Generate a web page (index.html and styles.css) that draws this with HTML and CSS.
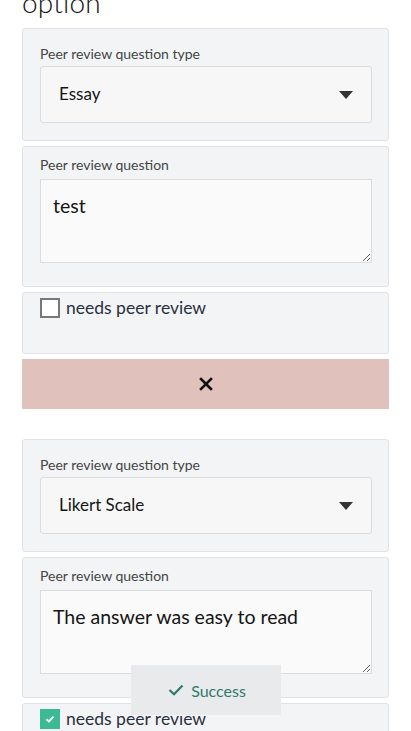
FILE: index.html
```html
<!DOCTYPE html>
<html lang="en">
<head>
<meta charset="utf-8">
<title>Peer review option</title>
<link rel="stylesheet" href="styles.css">
</head>
<body>
<main class="page">
  <h1 class="title">option</h1>

  <section class="card card-select">
    <label class="field-label">Peer review question type</label>
    <div class="select">
      <span class="select-value">Essay</span>
      <svg class="caret" width="14" height="8" viewBox="0 0 14 8"><path d="M0 0 H14 L7 8 Z" fill="#333"/></svg>
    </div>
  </section>

  <section class="card card-text">
    <label class="field-label">Peer review question</label>
    <textarea class="textarea" readonly>test</textarea>
  </section>

  <section class="card card-check">
    <div class="check-row">
      <span class="checkbox"></span>
      <span class="check-label">needs peer review</span>
    </div>
  </section>

  <button class="delete-bar" type="button" aria-label="Remove">
    <svg width="14" height="14" viewBox="0 0 14 14"><path d="M2 2 L12 12 M12 2 L2 12" stroke="#111" stroke-width="2.6" stroke-linecap="square"/></svg>
  </button>

  <div class="spacer"></div>

  <section class="card card-select">
    <label class="field-label">Peer review question type</label>
    <div class="select">
      <span class="select-value">Likert Scale</span>
      <svg class="caret" width="14" height="8" viewBox="0 0 14 8"><path d="M0 0 H14 L7 8 Z" fill="#333"/></svg>
    </div>
  </section>

  <section class="card card-text">
    <label class="field-label">Peer review question</label>
    <textarea class="textarea" readonly>The answer was easy to read</textarea>
  </section>

  <section class="card card-check">
    <div class="check-row">
      <span class="checkbox checked">
        <svg width="10" height="8" viewBox="0 0 10 8"><path d="M1.5 4.2 L4 6.4 L8.5 1.6" stroke="#fff" stroke-width="2" fill="none"/></svg>
      </span>
      <span class="check-label">needs peer review</span>
    </div>
  </section>
</main>

<div class="toast">
  <svg width="16" height="12" viewBox="0 0 16 12"><path d="M1.5 6 L6 10.2 L14.5 1.5" stroke="#2d7a6c" stroke-width="2.2" fill="none"/></svg>
  <span>Success</span>
</div>
</body>
</html>
```

FILE: styles.css
```css
* { box-sizing: border-box; }

html, body {
  margin: 0;
  padding: 0;
  background: #ffffff;
}

body {
  font-family: Lato, "Open Sans", sans-serif;
  color: #222;
}

.page {
  padding: 0 22px;
  display: flex;
  flex-direction: column;
  gap: 5px;
}

.title {
  font-family: Lato, sans-serif;
  font-weight: 300;
  font-size: 28px;
  line-height: 34px;
  margin: -15px 0 4px 0;
  color: #111;
  letter-spacing: 0.2px;
}

.card {
  background: #f3f4f6;
  border: 1px solid #e0e2e5;
  border-radius: 3px;
  padding: 0 16px 0 17px;
  display: flex;
  flex-direction: column;
}

.card-select { padding-top: 15px; padding-bottom: 17px; }
.card-text { padding-top: 8px; padding-bottom: 23px; }
.card-check { padding-top: 3px; padding-bottom: 33px; }

.field-label {
  font-size: 14px;
  line-height: 20px;
  color: #444;
}

.card-select .field-label { margin-bottom: 2px; }
.card-text .field-label { margin-bottom: 4px; }

.select {
  height: 57px;
  background: #f7f7f7;
  border: 1px solid #dcdcdc;
  border-radius: 3px;
  display: flex;
  align-items: center;
  justify-content: space-between;
  padding: 0 18px 2px 18px;
}

.select-value {
  font-size: 17px;
  line-height: 22px;
  color: #151515;
}

.caret { display: block; margin-top: 2px; }

.textarea {
  display: block;
  width: 100%;
  height: 84px;
  background: #fafafa;
  border: 1px solid #dcdcdc;
  border-radius: 0;
  padding: 11px 12px 10px;
  font-family: Lato, sans-serif;
  font-size: 19.5px;
  line-height: 30px;
  color: #151515;
  resize: vertical;
  outline: none;
}

.check-row {
  display: flex;
  align-items: center;
  gap: 6px;
  height: 24px;
}

.checkbox {
  width: 20px;
  height: 20px;
  border: 2px solid #777;
  background: #fff;
  display: flex;
  align-items: center;
  justify-content: center;
}

.checkbox.checked {
  background: #3bba94;
  border-color: #3bba94;
}

.check-label {
  font-size: 17.5px;
  line-height: 24px;
  color: #2a2f3d;
}

.delete-bar {
  height: 50px;
  border: 0;
  margin: 0;
  padding: 0;
  background: #e0c1bc;
  display: flex;
  align-items: center;
  justify-content: center;
  width: 100%;
}

.delete-bar svg { display: block; }

.spacer { height: 20px; }

.toast {
  position: fixed;
  left: 131px;
  bottom: 16px;
  width: 150px;
  height: 50px;
  background: #e9eaeb;
  display: flex;
  align-items: center;
  justify-content: center;
  gap: 7px;
  color: #2d7a6c;
  font-size: 16px;
}

.toast svg { display: block; margin-left: 2px; }
```
